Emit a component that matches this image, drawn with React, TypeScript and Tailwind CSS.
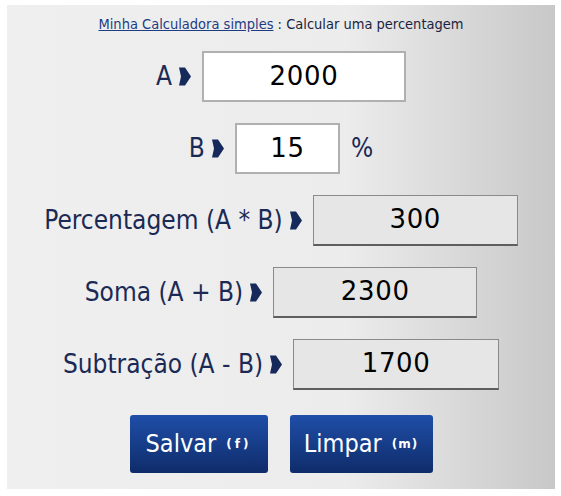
import { useState } from 'react'

const labelFont = { fontFamily: '"Liberation Sans Narrow", "DejaVu Sans Condensed", "Liberation Sans", sans-serif' }
const valueFont = { fontFamily: '"DejaVu Sans", "Liberation Sans", sans-serif' }

function Arrow() {
    return (
        <svg width="12" height="19" viewBox="0 0 12 19" className="shrink-0">
            <polygon points="0,0.5 6,0.5 12,9.5 6,18.5 0,18.5 2,9.5" fill="#15295a" />
        </svg>
    )
}

interface RowProps {
    label: string
    value: string
    width: string
    result?: boolean
    suffix?: string
}

function Row({ label, value, width, result, suffix }: RowProps) {
    return (
        <div className="flex items-center justify-center gap-[11px]">
            <div className="flex items-center gap-[7px]">
                <span className="text-[26px] text-[#1b2a55] leading-none" style={labelFont}>{label}</span>
                <Arrow />
            </div>
            <div
                className={`${width} h-[51px] flex items-center justify-center text-[26px] text-black tracking-wide ${result ? 'bg-[#e6e6e6] border border-[#8a8a8a] border-b-2 border-b-[#5e5e5e]' : 'bg-white border-2 border-[#b0b0b0]'}`}
                style={valueFont}
            >
                {value}
            </div>
            {suffix && (
                <span className="text-[26px] text-[#1b2a55] leading-none" style={labelFont}>{suffix}</span>
            )}
        </div>
    )
}

export default function App() {
    const [a] = useState(2000)
    const [b] = useState(15)
    const pct = (a * b) / 100

    return (
        <div className="w-[561px] h-[496px] bg-white pt-[5px] pl-[7px]">
            <div className="w-[548px] h-[484px] bg-[linear-gradient(to_right,#efefef_0%,#ececec_62%,#c8c8c8_100%)] flex flex-col items-center">
                {/* Title */}
                <div className="mt-[9px] text-[14.5px] text-[#1a2440]" style={labelFont}>
                    <a href="#" className="text-[#1e3c82] underline">Minha Calculadora simples</a>
                    <span> : Calcular uma percentagem</span>
                </div>

                <div className="mt-[15px] flex flex-col gap-[21px]">
                    <Row label="A" value={String(a)} width="w-[204px]" />
                    <Row label="B" value={String(b)} width="w-[105px]" suffix="%" />
                    <Row label="Percentagem (A * B)" value={String(pct)} width="w-[205px]" result />
                    <Row label="Soma (A + B)" value={String(a + pct)} width="w-[204px]" result />
                    <Row label="Subtração (A - B)" value={String(a - pct)} width="w-[206px]" result />
                </div>

                {/* Buttons */}
                <div className="mt-[25px] flex gap-[22px]">
                    <button className="w-[138px] h-[58px] rounded-[3px] bg-[linear-gradient(to_bottom,#1f4ea8,#0f2c6a)] text-white flex items-center justify-center gap-[10px]">
                        <span className="text-[25px]" style={labelFont}>Salvar</span>
                        <span className="text-[12px] font-bold tracking-[3px]" style={valueFont}>(f)</span>
                    </button>
                    <button className="w-[143px] h-[58px] rounded-[3px] bg-[linear-gradient(to_bottom,#1f4ea8,#0f2c6a)] text-white flex items-center justify-center gap-[10px]">
                        <span className="text-[25px]" style={labelFont}>Limpar</span>
                        <span className="text-[12px] font-bold tracking-[1px]" style={valueFont}>(m)</span>
                    </button>
                </div>
            </div>
        </div>
    )
}
